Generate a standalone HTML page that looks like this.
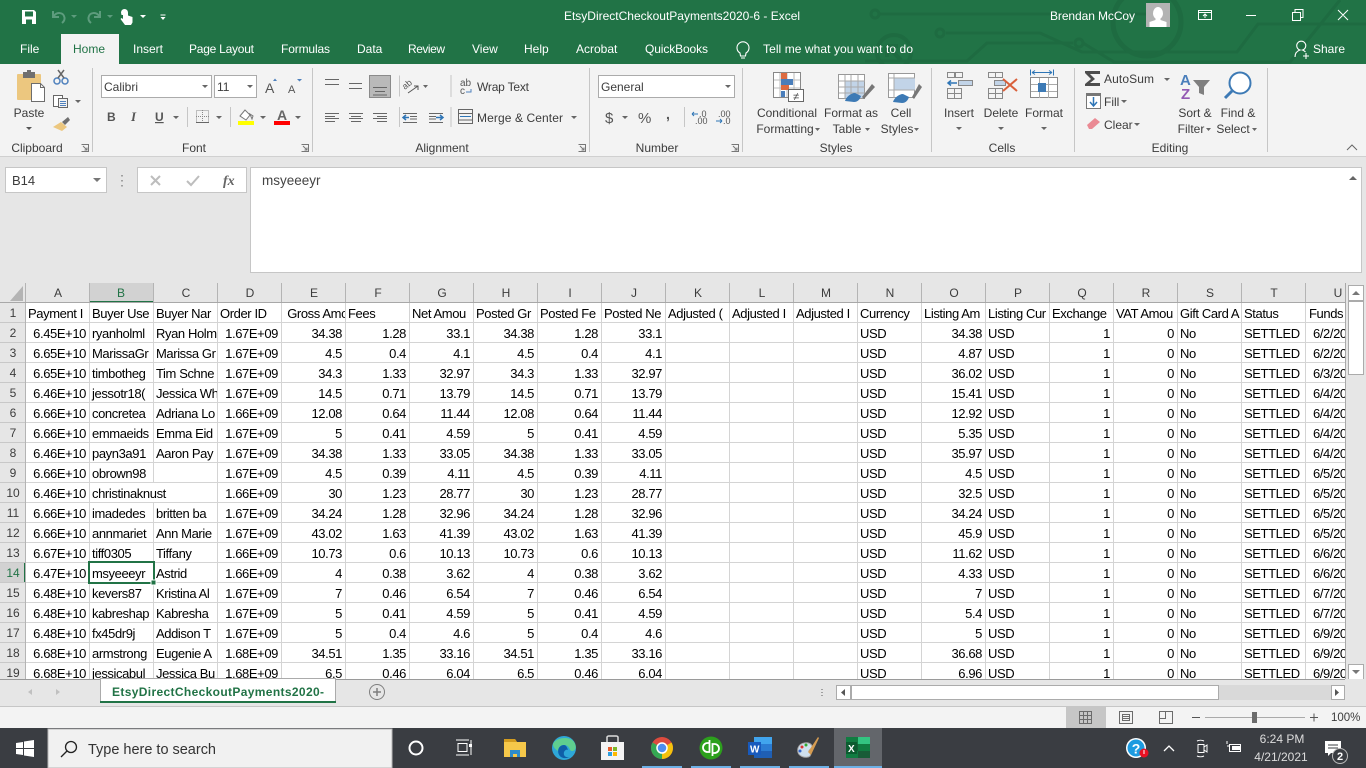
<!DOCTYPE html>
<html><head><meta charset="utf-8"><title>EtsyDirectCheckoutPayments2020-6 - Excel</title>
<style>
html,body{margin:0;padding:0;width:1366px;height:768px;overflow:hidden;background:#f3f3f3}
body{position:relative;font-family:"Liberation Sans",sans-serif}
#ui{position:absolute;left:0;top:0;z-index:2}
#ui text{font-family:"Liberation Sans",sans-serif;font-size:12px;fill:#3c3c3c}
#ui .w text,#ui text.w{fill:#fff}
#grid{position:absolute;left:26px;top:303px;width:1319px;height:376px;overflow:hidden;background:#fff;z-index:1}
table{border-collapse:separate;border-spacing:0;table-layout:fixed;width:1344px}
col{width:64px}
td{height:20px;box-sizing:border-box;padding:2px 3px 0 3px;border-right:1px solid #d4d4d4;border-bottom:1px solid #d4d4d4;font-size:13px;letter-spacing:-.4px;line-height:17px;color:#000;white-space:nowrap;overflow:hidden;text-align:right}
td.l{text-align:left;padding-left:2px;padding-right:0}
td:last-child{text-align:left;padding-left:7px;padding-right:0}
tr:first-child td:last-child{padding-left:3px}
</style></head><body>
<div id="grid"><table><colgroup><col><col><col><col><col><col><col><col><col><col><col><col><col><col><col><col><col><col><col><col><col></colgroup>
<tr><td class="l">Payment I</td><td class="l">Buyer Use</td><td class="l">Buyer Nar</td><td class="l">Order ID</td><td class="l">&nbsp;Gross Amc</td><td class="l">Fees</td><td class="l">Net Amou</td><td class="l">Posted Gr</td><td class="l">Posted Fe</td><td class="l">Posted Ne</td><td class="l">Adjusted (</td><td class="l">Adjusted I</td><td class="l">Adjusted I</td><td class="l">Currency</td><td class="l">Listing Am</td><td class="l">Listing Cur</td><td class="l">Exchange</td><td class="l">VAT Amou</td><td class="l">Gift Card A</td><td class="l">Status</td><td class="l">Funds</td></tr>
<tr><td>6.45E+10</td><td class="l">ryanholml</td><td class="l">Ryan Holm</td><td>1.67E+09</td><td>34.38</td><td>1.28</td><td>33.1</td><td>34.38</td><td>1.28</td><td>33.1</td><td></td><td></td><td></td><td class="l">USD</td><td>34.38</td><td class="l">USD</td><td>1</td><td>0</td><td class="l">No</td><td class="l">SETTLED</td><td>6/2/2021</td></tr>
<tr><td>6.65E+10</td><td class="l">MarissaGr</td><td class="l">Marissa Gr</td><td>1.67E+09</td><td>4.5</td><td>0.4</td><td>4.1</td><td>4.5</td><td>0.4</td><td>4.1</td><td></td><td></td><td></td><td class="l">USD</td><td>4.87</td><td class="l">USD</td><td>1</td><td>0</td><td class="l">No</td><td class="l">SETTLED</td><td>6/2/2021</td></tr>
<tr><td>6.65E+10</td><td class="l">timbotheg</td><td class="l">Tim Schne</td><td>1.67E+09</td><td>34.3</td><td>1.33</td><td>32.97</td><td>34.3</td><td>1.33</td><td>32.97</td><td></td><td></td><td></td><td class="l">USD</td><td>36.02</td><td class="l">USD</td><td>1</td><td>0</td><td class="l">No</td><td class="l">SETTLED</td><td>6/3/2021</td></tr>
<tr><td>6.46E+10</td><td class="l">jessotr18(</td><td class="l">Jessica Wh</td><td>1.67E+09</td><td>14.5</td><td>0.71</td><td>13.79</td><td>14.5</td><td>0.71</td><td>13.79</td><td></td><td></td><td></td><td class="l">USD</td><td>15.41</td><td class="l">USD</td><td>1</td><td>0</td><td class="l">No</td><td class="l">SETTLED</td><td>6/4/2021</td></tr>
<tr><td>6.66E+10</td><td class="l">concretea</td><td class="l">Adriana Lo</td><td>1.66E+09</td><td>12.08</td><td>0.64</td><td>11.44</td><td>12.08</td><td>0.64</td><td>11.44</td><td></td><td></td><td></td><td class="l">USD</td><td>12.92</td><td class="l">USD</td><td>1</td><td>0</td><td class="l">No</td><td class="l">SETTLED</td><td>6/4/2021</td></tr>
<tr><td>6.66E+10</td><td class="l">emmaeids</td><td class="l">Emma Eid</td><td>1.67E+09</td><td>5</td><td>0.41</td><td>4.59</td><td>5</td><td>0.41</td><td>4.59</td><td></td><td></td><td></td><td class="l">USD</td><td>5.35</td><td class="l">USD</td><td>1</td><td>0</td><td class="l">No</td><td class="l">SETTLED</td><td>6/4/2021</td></tr>
<tr><td>6.46E+10</td><td class="l">payn3a91</td><td class="l">Aaron Pay</td><td>1.67E+09</td><td>34.38</td><td>1.33</td><td>33.05</td><td>34.38</td><td>1.33</td><td>33.05</td><td></td><td></td><td></td><td class="l">USD</td><td>35.97</td><td class="l">USD</td><td>1</td><td>0</td><td class="l">No</td><td class="l">SETTLED</td><td>6/4/2021</td></tr>
<tr><td>6.66E+10</td><td class="l">obrown98</td><td class="l"></td><td>1.67E+09</td><td>4.5</td><td>0.39</td><td>4.11</td><td>4.5</td><td>0.39</td><td>4.11</td><td></td><td></td><td></td><td class="l">USD</td><td>4.5</td><td class="l">USD</td><td>1</td><td>0</td><td class="l">No</td><td class="l">SETTLED</td><td>6/5/2021</td></tr>
<tr><td>6.46E+10</td><td class="l" colspan="2">christinaknust</td><td>1.66E+09</td><td>30</td><td>1.23</td><td>28.77</td><td>30</td><td>1.23</td><td>28.77</td><td></td><td></td><td></td><td class="l">USD</td><td>32.5</td><td class="l">USD</td><td>1</td><td>0</td><td class="l">No</td><td class="l">SETTLED</td><td>6/5/2021</td></tr>
<tr><td>6.66E+10</td><td class="l">imadedes</td><td class="l">britten ba</td><td>1.67E+09</td><td>34.24</td><td>1.28</td><td>32.96</td><td>34.24</td><td>1.28</td><td>32.96</td><td></td><td></td><td></td><td class="l">USD</td><td>34.24</td><td class="l">USD</td><td>1</td><td>0</td><td class="l">No</td><td class="l">SETTLED</td><td>6/5/2021</td></tr>
<tr><td>6.66E+10</td><td class="l">annmariet</td><td class="l">Ann Marie</td><td>1.67E+09</td><td>43.02</td><td>1.63</td><td>41.39</td><td>43.02</td><td>1.63</td><td>41.39</td><td></td><td></td><td></td><td class="l">USD</td><td>45.9</td><td class="l">USD</td><td>1</td><td>0</td><td class="l">No</td><td class="l">SETTLED</td><td>6/5/2021</td></tr>
<tr><td>6.67E+10</td><td class="l">tiff0305</td><td class="l">Tiffany</td><td>1.66E+09</td><td>10.73</td><td>0.6</td><td>10.13</td><td>10.73</td><td>0.6</td><td>10.13</td><td></td><td></td><td></td><td class="l">USD</td><td>11.62</td><td class="l">USD</td><td>1</td><td>0</td><td class="l">No</td><td class="l">SETTLED</td><td>6/6/2021</td></tr>
<tr><td>6.47E+10</td><td class="l">msyeeeyr</td><td class="l">Astrid</td><td>1.66E+09</td><td>4</td><td>0.38</td><td>3.62</td><td>4</td><td>0.38</td><td>3.62</td><td></td><td></td><td></td><td class="l">USD</td><td>4.33</td><td class="l">USD</td><td>1</td><td>0</td><td class="l">No</td><td class="l">SETTLED</td><td>6/6/2021</td></tr>
<tr><td>6.48E+10</td><td class="l">kevers87</td><td class="l">Kristina Al</td><td>1.67E+09</td><td>7</td><td>0.46</td><td>6.54</td><td>7</td><td>0.46</td><td>6.54</td><td></td><td></td><td></td><td class="l">USD</td><td>7</td><td class="l">USD</td><td>1</td><td>0</td><td class="l">No</td><td class="l">SETTLED</td><td>6/7/2021</td></tr>
<tr><td>6.48E+10</td><td class="l">kabreshap</td><td class="l">Kabresha</td><td>1.67E+09</td><td>5</td><td>0.41</td><td>4.59</td><td>5</td><td>0.41</td><td>4.59</td><td></td><td></td><td></td><td class="l">USD</td><td>5.4</td><td class="l">USD</td><td>1</td><td>0</td><td class="l">No</td><td class="l">SETTLED</td><td>6/7/2021</td></tr>
<tr><td>6.48E+10</td><td class="l">fx45dr9j</td><td class="l">Addison T</td><td>1.67E+09</td><td>5</td><td>0.4</td><td>4.6</td><td>5</td><td>0.4</td><td>4.6</td><td></td><td></td><td></td><td class="l">USD</td><td>5</td><td class="l">USD</td><td>1</td><td>0</td><td class="l">No</td><td class="l">SETTLED</td><td>6/9/2021</td></tr>
<tr><td>6.68E+10</td><td class="l">armstrong</td><td class="l">Eugenie A</td><td>1.68E+09</td><td>34.51</td><td>1.35</td><td>33.16</td><td>34.51</td><td>1.35</td><td>33.16</td><td></td><td></td><td></td><td class="l">USD</td><td>36.68</td><td class="l">USD</td><td>1</td><td>0</td><td class="l">No</td><td class="l">SETTLED</td><td>6/9/2021</td></tr>
<tr><td>6.68E+10</td><td class="l">jessicabul</td><td class="l">Jessica Bu</td><td>1.68E+09</td><td>6.5</td><td>0.46</td><td>6.04</td><td>6.5</td><td>0.46</td><td>6.04</td><td></td><td></td><td></td><td class="l">USD</td><td>6.96</td><td class="l">USD</td><td>1</td><td>0</td><td class="l">No</td><td class="l">SETTLED</td><td>6/9/2021</td></tr>
</table></div>

<svg id="ui" width="1366" height="768" viewBox="0 0 1366 768" xmlns="http://www.w3.org/2000/svg">
<!-- title bar -->
<rect width="1366" height="64" fill="#217346"/>
<g fill="none" stroke="#1e6b41" stroke-width="3">
<path d="M878 14H1146M946 33H1040L1082 52H1237L1258 24H1366M865 61H967L987 43H1073M1083 43L1114 62H1290L1340 0"/>
<circle cx="875" cy="14" r="4"/><circle cx="940" cy="33" r="4"/><circle cx="1079" cy="43" r="4"/>
<circle cx="894" cy="52" r="17" stroke-width="4"/><circle cx="1147" cy="22" r="34" stroke-width="5"/>
<path d="M887 46l14 14M887 46h11M887 46v11" stroke-width="4"/>
</g>
<rect x="61" y="34" width="58" height="30" fill="#f3f3f3"/>
<!-- QAT -->
<g fill="#fff">
<path fill-rule="evenodd" d="M22 10h12l2 2v12H22zM25 11.500v5h8v-5zM26 19.500v4.500h6v-4.500z"/>
<path d="M140 15h6l-3 3zM160.500 14.500h5v1h-5zM160.500 17h5l-2.500 3z"/>
<path d="M121 12.500a3.500 3.500 0 1 1 7 0v3l4.500 1.500v5.500l-1.500 2.500h-6l-4.500-6 1-1 1.500 1v-4h-1.500z"/>
</g>
<g fill="none" stroke="#5d9c7d" stroke-width="2"><path d="M53 11v6h6M53.500 16.500c3-5 10-4.500 11 1 .3 2-.7 4-2.500 5.500M100 11v6h-6M99.500 16.500c-3-5-10-4.500-11 1-.3 2 .7 4 2.500 5.500"/></g>
<path d="M71 15h6l-3 3zM107 15h6l-3 3z" fill="#5d9c7d"/>
<g class="w"><text x="682" y="20" text-anchor="middle">EtsyDirectCheckoutPayments2020-6  -  Excel</text>
<text x="1050" y="20" textLength="85">Brendan McCoy</text>
<text x="20" y="53">File</text><text x="133" y="53">Insert</text><text x="189" y="53" textLength="65">Page Layout</text><text x="281" y="53" textLength="49">Formulas</text><text x="357" y="53">Data</text><text x="408" y="53" textLength="37">Review</text><text x="472" y="53">View</text><text x="524" y="53">Help</text><text x="576" y="53">Acrobat</text><text x="645" y="53" textLength="63">QuickBooks</text><text x="763" y="53" textLength="150">Tell me what you want to do</text><text x="1313" y="53">Share</text></g>
<text x="73" y="53" style="fill:#217346">Home</text>
<g fill="none" stroke="#fff" stroke-width="1.100"><path d="M740 53a6 6 0 1 1 6 0l-.5 3h-5zM741 58h4"/><path d="M1295 57c0-4 2-6 5-7a4.500 4.500 0 1 1 2.500 0c1.500.5 2 1 3 2M1303 56h6M1306 53v6"/></g>
<rect x="1146" y="3" width="24" height="24" fill="#b3b3b3"/><path fill="#fff" d="M1158 7a5 6.500 0 0 1 5 6.500c0 2-1 4-2.500 5v1.500l6 2v5h-17v-5l6-2v-1.500c-1.500-1-2.500-3-2.500-5a5 6.500 0 0 1 5-6.500z"/>
<g fill="none" stroke="#fff"><rect x="1198.500" y="10.500" width="13" height="9"/><path d="M1198.500 12.500h13M1205 18v-4M1203 16l2-2 2 2M1246 15.500h10M1292.500 12.500h8v8h-8zM1295 12v-2.500h8v8h-2M1338 10l10 10M1348 10l-10 10"/></g>
<!-- ribbon -->
<rect y="64" width="1366" height="92" fill="#f3f3f3"/><rect y="156" width="1366" height="1" fill="#d0d0d0"/>
<path d="M92.500 68v84M312.500 68v84M589.500 68v84M742.500 68v84M931.500 68v84M1074.500 68v84M1267.500 68v84" stroke="#c6c6c6"/>
<g><text x="37" y="152" text-anchor="middle">Clipboard</text><text x="194" y="152" text-anchor="middle">Font</text><text x="442" y="152" text-anchor="middle">Alignment</text><text x="657" y="152" text-anchor="middle">Number</text><text x="836" y="152" text-anchor="middle">Styles</text><text x="1002" y="152" text-anchor="middle">Cells</text><text x="1170" y="152" text-anchor="middle">Editing</text></g>
<g fill="none" stroke="#777"><path d="M81.500 144.500h7v7h-7M88.500 144.500v7M83 146l4 4M87 147.500v2.500h-2.500M301.500 144.500h7v7h-7M308.500 144.500v7M303 146l4 4M307 147.500v2.500h-2.500M578.500 144.500h7v7h-7M585.500 144.500v7M580 146l4 4M584 147.500v2.500h-2.500M731.500 144.500h7v7h-7M738.500 144.500v7M733 146l4 4M737 147.500v2.500h-2.500"/></g>
<path d="M1347 150l5-5 5 5" fill="none" stroke="#666"/>
<!-- clipboard -->
<rect x="17" y="74" width="24" height="26" rx="1" fill="#ecc77f"/><rect x="23" y="72" width="12" height="6" fill="#6f6f6f"/><rect x="27" y="70" width="4" height="4" fill="#6f6f6f"/>
<path d="M31.500 83.500h9l4 4v14h-13z" fill="#fff" stroke="#6d6d6d"/><path d="M40.500 83.500v4h4" fill="none" stroke="#6d6d6d"/>
<text x="29" y="117" text-anchor="middle">Paste</text><path d="M26 127h6l-3 3z" fill="#555"/>
<g fill="none" stroke="#4f81bd" stroke-width="1.500"><circle cx="57" cy="81" r="3"/><circle cx="65" cy="81" r="3"/></g><path d="M58 78l6-8M64 78l-6-8" stroke="#666" stroke-width="1.500"/>
<g fill="#fff" stroke="#666"><path d="M53.500 95.500h9v11h-9z"/><path d="M58.500 98.500h9v9h-9z" fill="#f3f3f3"/></g><path d="M60 101.500h6M60 103.500h6M60 105.500h6" stroke="#4f81bd"/><path d="M75 100h6l-3 3z" fill="#666"/>
<path d="M53 127l8-5 6 5-5 4z" fill="#ecc77f"/><path d="M62 122l6-5 2 3-5 5z" fill="#6f6f6f"/>
<!-- font -->
<rect x="101.500" y="75.500" width="110" height="22" fill="#fff" stroke="#ababab"/><rect x="214.500" y="75.500" width="42" height="22" fill="#fff" stroke="#ababab"/>
<text x="104" y="91">Calibri</text><text x="217" y="91">11</text>
<path d="M202 85h6l-3 3zM247 85h6l-3 3zM173 116h6l-3 3zM216 116h6l-3 3zM260 116h6l-3 3zM295 116h6l-3 3z" fill="#666"/>
<text x="265" y="93" style="font-size:14px;fill:#555">A</text><text x="288" y="93" style="font-size:11px;fill:#555">A</text><path d="M273 81h4l-2-2.500zM297 79h5l-2.500 2.500z" fill="#4f81bd"/>
<text x="107" y="121" style="font-weight:bold;fill:#555">B</text><text x="131" y="121" style="font-style:italic;font-family:'Liberation Serif',serif;font-size:13px;fill:#555;font-weight:bold">I</text><text x="155" y="121" style="font-weight:bold;fill:#555;text-decoration:underline">U</text>
<path d="M187.500 107v20M230.500 107v20" stroke="#c6c6c6"/>
<path d="M196.500 110.500h12v12h-12zM202.500 110v13M196 116.500h13" fill="none" stroke="#888" stroke-dasharray="1 1"/><path d="M196 122.500h13" stroke="#666"/>
<path d="M240 116l5-6 5 5-4 5zM250 114l3 2-1 3z" fill="#fff" stroke="#777"/><rect x="238" y="121" width="16" height="4" fill="#ff0"/>
<text x="277" y="120" style="font-weight:bold;font-size:14px;fill:#666">A</text><rect x="274" y="121" width="16" height="4" fill="#f00"/>
<!-- alignment -->
<rect x="369.500" y="75.500" width="21" height="22" fill="#b9b9b9" stroke="#8a8a8a"/>
<path d="M325 79.500h14M325 84.500h14M349 83.500h13M349 88.500h13M373 87.500h14M375 91.500h10M373 95h14M325 113.500h14M325 116.500h10M325 118.500h14M325 121.500h10M349 113.500h14M351 116.500h10M349 118.500h14M351 121.500h10M373 113.500h14M377 116.500h10M373 118.500h14M377 121.500h10" stroke="#666" fill="none"/>
<path d="M399.500 75.500v21M399.500 107v20M451 75v22M451 107v20" stroke="#c6c6c6"/>
<text x="405" y="90" transform="rotate(-40 405 90)" style="font-size:9px;fill:#555">ab</text><path d="M408 93l10-7M414 86h4v4" stroke="#555" fill="none"/><path d="M423 85h5l-2.500 3z" fill="#666"/>
<path d="M403 113.500h14M410 116.500h7M410 119h7M403 122.500h14M429 113.500h14M429 116.500h7M429 119h7M429 122.500h14" stroke="#666"/><path d="M403 117.500h6M406 115l-3 2.500 3 2.500M436 117.500h6M440 115l3 2.500-3 2.500" stroke="#2e75b6" stroke-width="1.500" fill="none"/>
<text x="460" y="86" style="font-size:10px;fill:#555">ab</text><text x="460" y="94" style="font-size:10px;fill:#555">c</text><path d="M468 92h3v-3M466 92h5" stroke="#4f81bd" fill="none"/>
<text x="477" y="91" textLength="52">Wrap Text</text>
<rect x="458.500" y="109.500" width="14" height="14" fill="none" stroke="#666"/><path d="M459 113.500h13M459 120h13" stroke="#666"/><path d="M460 116.500h11" stroke="#2e75b6"/>
<text x="477" y="122" textLength="86">Merge &amp; Center</text><path d="M571 116h6l-3 3z" fill="#666"/>
<!-- number -->
<rect x="598.500" y="75.500" width="136" height="22" fill="#fff" stroke="#ababab"/><text x="601" y="91">General</text><path d="M725 85h6l-3 3z" fill="#666"/>
<text x="605" y="123" style="font-size:15px;fill:#555">$</text><path d="M622 116h6l-3 3z" fill="#666"/><text x="638" y="123" style="font-size:15px;fill:#555">%</text><text x="666" y="119" style="font-weight:bold;font-size:14px;fill:#555">,</text>
<path d="M684.500 107v20" stroke="#c6c6c6"/>
<text x="699" y="117" style="font-size:9px;fill:#555">.0</text><text x="695" y="124" style="font-size:9px;fill:#555">.00</text><path d="M692 114h6M692 114l2-2M692 114l2 2" stroke="#2e75b6" fill="none"/>
<text x="718" y="117" style="font-size:9px;fill:#555">.00</text><text x="723" y="124" style="font-size:9px;fill:#555">.0</text><path d="M716 121h6M722 121l-2-2M722 121l-2 2" stroke="#2e75b6" fill="none"/>
<!-- styles -->
<g fill="#fff" stroke="#888"><rect x="773.500" y="72.500" width="27" height="25"/></g>
<path d="M780 73v24M787 73v24M794 73v24M774 80h26M774 88h26" stroke="#bbb" fill="none"/><rect x="781" y="73" width="6" height="6" fill="#de6b41"/><rect x="781" y="79" width="12" height="6" fill="#4a7ebb"/><rect x="781" y="85" width="8" height="5" fill="#de6b41"/><rect x="781" y="91" width="4" height="6" fill="#4a7ebb"/>
<rect x="788.500" y="89.500" width="15" height="12" fill="#fff" stroke="#666"/><text x="796" y="100" text-anchor="middle" style="fill:#444;font-size:11px">≠</text>
<rect x="838.500" y="74.500" width="26" height="24" fill="#fff" stroke="#999"/><rect x="845" y="81" width="19" height="17" fill="#c2d4e8"/><path d="M845 75v24M851 75v24M858 75v24M839 81h26M839 87h26M839 93h26" stroke="#aaa" fill="none"/>
<path d="M862 97l10-13 3 3-11 12z" fill="#777"/><path d="M845 101c1-4 6-8 10-8l6 3c-1 3-3 6-7 6z" fill="#3d7ab5"/>
<rect x="888.500" y="73.500" width="26" height="24" fill="#fff" stroke="#999"/><rect x="894" y="78" width="21" height="12" fill="#c2d4e8"/><path d="M894 74v24M889 78h26M889 90h26" stroke="#aaa" fill="none"/>
<path d="M912 97l7-13 3 3-8 12z" fill="#777"/><path d="M893 102c1-4 6-8 10-8l6 3c-1 3-3 6-7 6z" fill="#3d7ab5"/>
<text x="787" y="117" text-anchor="middle">Conditional</text><text x="785" y="133" text-anchor="middle">Formatting</text><path d="M815 128h5l-2.500 3z" fill="#666"/>
<text x="851" y="117" text-anchor="middle">Format as</text><text x="847" y="133" text-anchor="middle">Table</text><path d="M865 128h5l-2.500 3z" fill="#666"/>
<text x="901" y="117" text-anchor="middle">Cell</text><text x="897" y="133" text-anchor="middle">Styles</text><path d="M914 128h5l-2.500 3z" fill="#666"/>
<!-- cells -->
<g fill="none" stroke="#888"><path d="M947.500 72.500h7v5h-7zM955.500 72.500h7v5h-7zM947.500 88.500h14v10h-14zM954.500 88.500v10M947.500 93.500h14M988.500 72.500h14v5h-14zM995.500 72.500v5M988.500 88.500h14v10h-14zM995.500 88.500v10M988.500 93.500h14"/></g>
<rect x="958.500" y="80.500" width="14" height="5" fill="#c2d4e8" stroke="#888"/><path d="M948 83h9M951 80.500l-3 2.500 3 2.500" stroke="#2e75b6" fill="none" stroke-width="1.500"/>
<rect x="994.500" y="80.500" width="11" height="5" fill="#c2d4e8" stroke="#888"/><path d="M1003 79l14 12M1017 79l-14 12" stroke="#d9603b" stroke-width="2"/>
<rect x="1030.500" y="77.500" width="27" height="20" fill="#fff" stroke="#888"/><path d="M1039.500 78v20M1048.500 78v20M1031 84.500h26M1031 91.500h26" stroke="#aaa"/><rect x="1038" y="83" width="8" height="9" fill="#3d7ab5"/><path d="M1032 72.500h20M1032 72.500l3-2M1032 72.500l3 2M1052 72.500l-3-2M1052 72.500l-3 2M1030.500 69.500v6M1053.500 69.500v6" stroke="#2e75b6" fill="none"/>
<text x="959" y="117" text-anchor="middle">Insert</text><text x="1001" y="117" text-anchor="middle">Delete</text><text x="1044" y="117" text-anchor="middle">Format</text>
<path d="M956 127h6l-3 3zM998 127h6l-3 3zM1041 127h6l-3 3z" fill="#666"/>
<!-- editing -->
<path d="M1085 71h15v3h-10l5 5-5 4h10v3h-15v-2l6-5-6-6z" fill="#4d4d4d"/><text x="1104" y="83" textLength="50">AutoSum</text><path d="M1164 78h6l-3 3z" fill="#666"/>
<rect x="1086.500" y="93.500" width="14" height="15" fill="#fff" stroke="#777"/><rect x="1086" y="93" width="15" height="3" fill="#777"/><path d="M1093.500 97v8M1090 102l3.500 4 3.500-4" stroke="#2e75b6" stroke-width="1.500" fill="none"/><text x="1104" y="106">Fill</text><path d="M1121 100h6l-3 3z" fill="#666"/>
<path d="M1087 125l8-7 5 4-8 7h-3z" fill="#ea8a94"/><text x="1104" y="129">Clear</text><path d="M1134 123h6l-3 3z" fill="#666"/>
<text x="1180" y="85" style="font-size:15px;font-weight:bold;fill:#4a7ebb">A</text><text x="1181" y="99" style="font-size:15px;font-weight:bold;fill:#9359b3">Z</text><path d="M1193 80h17l-6 7v8l-5-2v-6z" fill="#7f7f7f"/>
<circle cx="1240" cy="83" r="10.500" fill="#fff" stroke="#3d7ab5" stroke-width="2"/><path d="M1232 91l-7 7" stroke="#3d7ab5" stroke-width="3"/>
<text x="1195" y="117" text-anchor="middle">Sort &amp;</text><text x="1191" y="133" text-anchor="middle">Filter</text><path d="M1206 128h5l-2.500 3z" fill="#666"/>
<text x="1238" y="117" text-anchor="middle">Find &amp;</text><text x="1233" y="133" text-anchor="middle">Select</text><path d="M1252 128h5l-2.500 3z" fill="#666"/>
<!-- formula bar -->
<rect y="157" width="1366" height="126" fill="#e6e6e6"/>
<rect x="5.500" y="167.500" width="101" height="25" fill="#fff" stroke="#c6c6c6"/><text x="12" y="185" style="font-size:13px">B14</text><path d="M93 178h8l-4 4z" fill="#777"/>
<path d="M122 175v1.500M122 180v1.500M122 185v1.500" stroke="#a0a0a0" stroke-width="2"/>
<rect x="137.500" y="167.500" width="109" height="25" fill="#fff" stroke="#c6c6c6"/><path d="M151 176l9 9M160 176l-9 9M187 181l4 4 8-9" stroke="#bdbdbd" stroke-width="2" fill="none"/>
<text x="223" y="185" style="font-family:'Liberation Serif',serif;font-style:italic;font-weight:bold;font-size:14px;fill:#666">fx</text>
<rect x="250.500" y="167.500" width="1111" height="105" fill="#fff" stroke="#c6c6c6"/><text x="262" y="185" style="font-size:13.500px;fill:#444">msyeeeyr</text><path d="M1349 180l4-4 4 4" fill="#666"/>
<!-- column/row headers -->
<rect y="283" width="1345" height="20" fill="#e6e6e6"/><rect y="303" width="26" height="376" fill="#e6e6e6"/>
<rect x="89" y="283" width="64" height="20" fill="#d2d2d2"/><rect x="89" y="301" width="65" height="2" fill="#217346"/>
<path d="M23 286v15H10z" fill="#b4b4b4"/>
<rect y="563" width="26" height="20" fill="#d2d2d2"/><rect x="24" y="563" width="2" height="20" fill="#217346"/>
<path d="M25.500 283v396M89.500 283v20M153.500 283v20M217.500 283v20M281.500 283v20M345.500 283v20M409.500 283v20M473.500 283v20M537.500 283v20M601.500 283v20M665.500 283v20M729.500 283v20M793.500 283v20M857.500 283v20M921.500 283v20M985.500 283v20M1049.500 283v20M1113.500 283v20M1177.500 283v20M1241.500 283v20M1305.500 283v20" stroke="#b4b4b4"/>
<path d="M0 302.500H1345M1345.500 283V679" stroke="#a8a8a8"/><path d="M0 322.500h25M0 342.500h25M0 362.500h25M0 382.500h25M0 402.500h25M0 422.500h25M0 442.500h25M0 462.500h25M0 482.500h25M0 502.500h25M0 522.500h25M0 542.500h25M0 562.500h25M0 582.500h25M0 602.500h25M0 622.500h25M0 642.500h25M0 662.500h25" stroke="#c8c8c8"/>
<g><text x="58" y="297" text-anchor="middle">A</text><text x="121" y="297" text-anchor="middle" style="fill:#217346">B</text><text x="186" y="297" text-anchor="middle">C</text><text x="250" y="297" text-anchor="middle">D</text><text x="314" y="297" text-anchor="middle">E</text><text x="378" y="297" text-anchor="middle">F</text><text x="442" y="297" text-anchor="middle">G</text><text x="506" y="297" text-anchor="middle">H</text><text x="570" y="297" text-anchor="middle">I</text><text x="634" y="297" text-anchor="middle">J</text><text x="698" y="297" text-anchor="middle">K</text><text x="762" y="297" text-anchor="middle">L</text><text x="826" y="297" text-anchor="middle">M</text><text x="890" y="297" text-anchor="middle">N</text><text x="954" y="297" text-anchor="middle">O</text><text x="1018" y="297" text-anchor="middle">P</text><text x="1082" y="297" text-anchor="middle">Q</text><text x="1146" y="297" text-anchor="middle">R</text><text x="1210" y="297" text-anchor="middle">S</text><text x="1274" y="297" text-anchor="middle">T</text><text x="1338" y="297" text-anchor="middle">U</text></g>
<g><text x="13" y="317" text-anchor="middle">1</text><text x="13" y="337" text-anchor="middle">2</text><text x="13" y="357" text-anchor="middle">3</text><text x="13" y="377" text-anchor="middle">4</text><text x="13" y="397" text-anchor="middle">5</text><text x="13" y="417" text-anchor="middle">6</text><text x="13" y="437" text-anchor="middle">7</text><text x="13" y="457" text-anchor="middle">8</text><text x="13" y="477" text-anchor="middle">9</text><text x="13" y="497" text-anchor="middle">10</text><text x="13" y="517" text-anchor="middle">11</text><text x="13" y="537" text-anchor="middle">12</text><text x="13" y="557" text-anchor="middle">13</text><text x="13" y="577" text-anchor="middle" style="fill:#217346">14</text><text x="13" y="597" text-anchor="middle">15</text><text x="13" y="617" text-anchor="middle">16</text><text x="13" y="637" text-anchor="middle">17</text><text x="13" y="657" text-anchor="middle">18</text><text x="13" y="677" text-anchor="middle">19</text></g>
<!-- selection -->
<rect x="89" y="562" width="65" height="21" fill="none" stroke="#217346" stroke-width="2"/><rect x="151" y="580" width="5" height="5" fill="#217346" stroke="#fff"/>
<!-- v scrollbar -->
<rect x="1346" y="283" width="20" height="396" fill="#e6e6e6"/>
<rect x="1348.500" y="285.500" width="15" height="15" fill="#fff" stroke="#ababab"/><path d="M1352 295l4-4 4 4z" fill="#777"/>
<rect x="1348.500" y="301.500" width="15" height="73" fill="#fff" stroke="#ababab"/>
<rect x="1348.500" y="664.500" width="15" height="15" fill="#fff" stroke="#ababab"/><path d="M1352 670l4 4 4-4z" fill="#777"/>
<!-- sheet tabs -->
<rect y="679" width="1366" height="27" fill="#e6e6e6"/><rect y="679" width="1345" height="1" fill="#9a9a9a"/>
<path d="M32 689l-4 3 4 3zM56 689l4 3-4 3z" fill="#c0c0c0"/>
<rect x="100.500" y="678.500" width="235" height="24" fill="#fff" stroke="#ababab"/><rect x="100" y="701" width="236" height="2" fill="#217346"/>
<text x="112" y="696" style="font-weight:bold;fill:#217346" textLength="212">EtsyDirectCheckoutPayments2020-</text>
<circle cx="377" cy="692" r="7.500" fill="none" stroke="#7f7f7f"/><path d="M373 692h8M377 688v8" stroke="#7f7f7f" stroke-width="1.500"/>
<path d="M822 689v1M822 692v1M822 695v1" stroke="#888" stroke-width="1.500"/>
<rect x="836.500" y="685.500" width="14" height="14" fill="#fff" stroke="#ababab"/><path d="M845 689l-4 3.500 4 3.500z" fill="#555"/>
<rect x="851" y="685" width="480" height="15" fill="#d9d9d9"/><rect x="851.500" y="685.500" width="367" height="14" fill="#fff" stroke="#ababab"/>
<rect x="1331.500" y="685.500" width="13" height="14" fill="#fff" stroke="#ababab"/><path d="M1335 689l4 3.500-4 3.500z" fill="#555"/>
<!-- status bar -->
<rect y="706" width="1366" height="1" fill="#c6c6c6"/><rect y="707" width="1366" height="21" fill="#f3f3f3"/>
<rect x="1066" y="707" width="40" height="21" fill="#c6c6c6"/>
<g fill="none" stroke="#6b6b6b"><path d="M1079.500 711.500h12v12h-12zM1083.500 711v13M1087.500 711v13M1079 715.500h13M1079 719.500h13"/><path d="M1119.500 711.500h13v12h-13zM1122.500 714.500h7v6h-7zM1123 716.500h6M1123 718.500h6"/><path d="M1159.500 711.500h13v12h-13zM1159.500 718.500h6v-7"/></g>
<path d="M1192 717.500h8M1310 717.500h8M1314 713.500v8" stroke="#555"/><path d="M1205 717.500h100" stroke="#aaa"/><rect x="1252" y="712" width="5" height="11" fill="#6b6b6b"/>
<text x="1331" y="721" style="font-size:11.500px">100%</text>
<!-- taskbar -->
<rect y="728" width="1366" height="40" fill="#3a3d42"/>
<path d="M16 743l7-1v6h-7zM24 741.500l10-1.500v8h-10zM16 749h7v6l-7-1zM24 749h10v8l-10-1.500z" fill="#fff"/>
<rect x="48" y="729" width="344" height="39" fill="#f1f1f1" stroke="#b8b8b8"/>
<circle cx="71" cy="747" r="5.500" fill="none" stroke="#222" stroke-width="1.300"/><path d="M67 751l-6 6" stroke="#222" stroke-width="1.300"/>
<text x="88" y="754" style="font-size:14.500px;fill:#333" textLength="128">Type here to search</text>
<circle cx="416" cy="748" r="6.500" fill="none" stroke="#fff" stroke-width="2"/>
<path d="M456 740h13M456 755h13M458 743.500h9v8h-9zM471 740v15" stroke="#fff" fill="none"/><rect x="469" y="744" width="3" height="3" fill="#fff"/>
<path d="M504 739h11l2 3h9v15h-22z" fill="#f6c84a"/><path d="M504 739h11l2 3h-13z" fill="#d39c1f"/><path d="M510 750h10v7h-3v-3h-4v3h-3z" fill="#2d8ccb"/>
<circle cx="564" cy="748" r="12" fill="#2ea7d8"/><path d="M553 744c3-7 17-8 21-2 3 4 2 9-2 9-3 0-2-6-8-6-4 0-6 3-6 6-3-2-5-4-5-7z" fill="#5fcf8f"/><path d="M564 745c-6 0-8 8-3 12 3 2 7 1 9 0-4 1-7-1-6-5 1-2 3-3 4-2-1-3-2-5-4-5z" fill="#0f5fa8"/>
<rect x="601" y="742" width="23" height="18" fill="#f4f4f4"/><path d="M607 742v-5a2 2 0 0 1 2-1h7a2 2 0 0 1 2 1v5" fill="none" stroke="#ddd" stroke-width="1.500"/><rect x="608" y="747" width="4" height="4" fill="#e85c2b"/><rect x="613" y="747" width="4" height="4" fill="#7db928"/><rect x="608" y="752" width="4" height="4" fill="#2e9fe0"/><rect x="613" y="752" width="4" height="4" fill="#fdb900"/>
<circle cx="662" cy="748" r="11" fill="#dd4b3e"/><path d="M662 748l9.500-5.500a11 11 0 0 1-9.500 16.500z" fill="#f4c20d"/><path d="M662 748v11a11 11 0 0 1-9.500-16.500z" fill="#34a853"/><circle cx="662" cy="748" r="5" fill="#4f8ef0" stroke="#fff" stroke-width="1.500"/>
<circle cx="711" cy="748" r="11.500" fill="#2ca01c"/><path d="M709 743h-1.500a4.500 4.500 0 0 0 0 9H709.500V740M713 753h1.500a4.500 4.500 0 0 0 0-9H712.500V756" fill="none" stroke="#fff" stroke-width="1.800"/>
<rect x="754" y="737" width="18" height="21" fill="#1f5fb4"/><rect x="754" y="737" width="18" height="7" fill="#41a5ee"/><rect x="754" y="744" width="18" height="7" fill="#2b7cd3"/><rect x="748" y="742" width="13" height="13" fill="#185abd"/><text x="750" y="752.500" style="font-size:10px;font-weight:bold;fill:#fff">W</text>
<path d="M798 748c2-6 12-7 14-2 1 3-3 3-3 5 0 2 3 2 1 5-3 3-14 1-12-8z" fill="#cfe0ee" stroke="#aaa"/><path d="M808 752l10-15 1 1-8 17z" fill="#d59c52"/><circle cx="802" cy="747" r="1.500" fill="#d33"/><circle cx="806" cy="745" r="1.500" fill="#3a3"/><circle cx="800" cy="751" r="1.500" fill="#36c"/>
<rect x="834" y="728" width="48" height="40" fill="#63666b"/><rect x="846" y="737" width="24" height="21" fill="#107c41"/><rect x="858" y="737" width="12" height="7" fill="#33c481"/><rect x="858" y="751" width="12" height="7" fill="#185c37"/><rect x="846" y="744" width="12" height="7" fill="#185c37"/><rect x="846" y="742" width="11" height="12" fill="#0b5c30"/><text x="848" y="752" style="font-size:10px;font-weight:bold;fill:#fff">X</text>
<path d="M642 767h40M691 767h40M740 767h40M789 767h40M834 767h48" stroke="#6cb0e6" stroke-width="2"/>
<circle cx="1136" cy="748" r="10" fill="#fff"/><circle cx="1136" cy="748" r="8.500" fill="#1d9be0"/><text x="1136" y="753.500" text-anchor="middle" style="font-size:14px;font-weight:bold;fill:#fff">?</text><circle cx="1144" cy="753" r="4.500" fill="#e81123"/><rect x="1143.500" y="750" width="1" height="4" fill="#fff"/>
<path d="M1164 751l5-5 5 5" fill="none" stroke="#fff" stroke-width="1.300"/>
<path d="M1198 744.500h6v8h-6zM1204 747l3-2v7l-3-2M1197 741c2-1 5-1 7 0M1197 756c2 1 5 1 7 0" fill="none" stroke="#fff"/>
<path d="M1229.500 744.500h11v7h-11z" fill="none" stroke="#fff"/><rect x="1232" y="746" width="8" height="4" fill="#fff"/><path d="M1227 741v3M1228 745v2" stroke="#fff"/>
<text x="1282" y="743" text-anchor="middle" style="fill:#ddd">6:24 PM</text><text x="1281" y="761" text-anchor="middle" style="fill:#ddd">4/21/2021</text>
<path d="M1325 741h16v12h-10l-3 3v-3h-3z" fill="#fff"/><path d="M1328 745h10M1328 748h10" stroke="#3a3d42"/><circle cx="1340" cy="756" r="7.500" fill="#3a3d42" stroke="#bbb"/><text x="1340" y="760" text-anchor="middle" style="font-size:11px;font-weight:bold;fill:#fff">2</text>
</svg>
</body></html>
